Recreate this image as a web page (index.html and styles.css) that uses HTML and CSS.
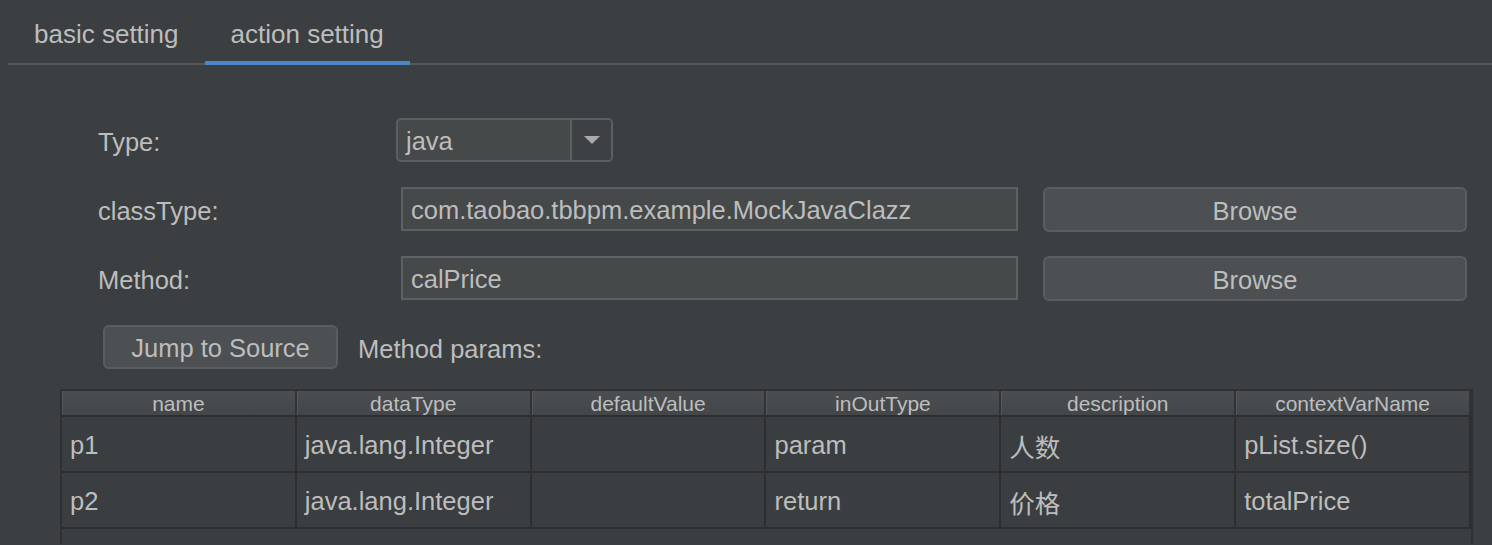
FILE: index.html
```html
<!DOCTYPE html>
<html>
<head>
<meta charset="utf-8">
<link rel="stylesheet" href="styles.css">
</head>
<body>
<div class="tabbar">
  <div class="tab">basic setting</div>
  <div class="tab active">action setting</div>
</div>
<div class="form">
  <div class="label">Type:</div>
  <div class="combo">
    <span class="combo-value">java</span>
    <span class="combo-arrow"><svg width="16" height="8" viewBox="0 0 16 8"><polygon points="0,0 16,0 8,8" fill="#a8aaac"/></svg></span>
  </div>
  <div></div>
  <div class="label">classType:</div>
  <div class="field">com.taobao.tbbpm.example.MockJavaClazz</div>
  <div class="button">Browse</div>
  <div class="label">Method:</div>
  <div class="field">calPrice</div>
  <div class="button">Browse</div>
</div>
<div class="actions">
  <div class="button jump">Jump to Source</div>
  <div class="label">Method params:</div>
</div>
<div class="table-wrap">
  <div class="table">
    <div class="th">name</div>
    <div class="th">dataType</div>
    <div class="th">defaultValue</div>
    <div class="th">inOutType</div>
    <div class="th">description</div>
    <div class="th">contextVarName</div>
    <div class="td">p1</div>
    <div class="td">java.lang.Integer</div>
    <div class="td"></div>
    <div class="td">param</div>
    <div class="td">人数</div>
    <div class="td">pList.size()</div>
    <div class="td">p2</div>
    <div class="td">java.lang.Integer</div>
    <div class="td"></div>
    <div class="td">return</div>
    <div class="td">价格</div>
    <div class="td">totalPrice</div>
  </div>
</div>
</body>
</html>
```
FILE: styles.css
```css
html, body {
  margin: 0;
  padding: 0;
  background: #3c3f41;
  color: #bdbdbd;
  font-family: "Liberation Sans", "Noto Sans CJK SC", sans-serif;
  font-size: 25.5px;
  overflow: hidden;
  height: 545px;
}

.tabbar {
  display: flex;
  margin-left: 8px;
  height: 63px;
  border-bottom: 2px solid #55585a;
}

.tab {
  box-sizing: border-box;
  height: 65px;
  margin-bottom: -2px;
  padding: 19px 26px 0;
  font-size: 26px;
  line-height: 30px;
}

.tab.active {
  border-bottom: 4px solid #4a88c7;
}

.form {
  display: grid;
  grid-template-columns: 273px 622px 424px;
  grid-auto-rows: 44px;
  column-gap: 25px;
  row-gap: 25px;
  margin: 53px 0 0 98px;
}

.label {
  display: flex;
  align-items: center;
  line-height: 30px;
  padding-top: 3px;
}

.combo {
  box-sizing: border-box;
  width: 217px;
  height: 44px;
  display: flex;
  border: 2px solid #5c5f61;
  border-radius: 5px;
  background: #45494a;
  overflow: hidden;
}

.combo-value {
  flex: 1;
  display: flex;
  align-items: center;
  padding: 3px 0 0 8px;
}

.combo-arrow {
  width: 39px;
  display: flex;
  align-items: center;
  justify-content: center;
  background: #3e4143;
  border-left: 2px solid #5c5f61;
}

.field {
  box-sizing: border-box;
  margin-left: 5px;
  height: 44px;
  display: flex;
  align-items: center;
  padding: 3px 0 0 8px;
  border: 2px solid #5e6163;
  background: #45494a;
}

.button {
  box-sizing: border-box;
  height: 45px;
  display: flex;
  align-items: center;
  justify-content: center;
  padding-top: 3px;
  border: 2px solid #5a5e60;
  border-radius: 6px;
  background: #4c5052;
}

.actions {
  display: flex;
  align-items: center;
  gap: 20px;
  margin: 25px 0 0 103px;
  height: 44px;
}

.button.jump {
  width: 235px;
  height: 44px;
}

.table-wrap {
  box-sizing: border-box;
  margin: 20px 0 0 60px;
  width: 1413px;
  height: 155px;
  border: 2px solid #2f3133;
  border-bottom: none;
  background: #3b3e40;
}

.table {
  display: grid;
  grid-template-columns: repeat(6, 1fr);
  grid-template-rows: 26px 56px 56px;
}

.th {
  display: flex;
  align-items: center;
  justify-content: center;
  padding-top: 1px;
  font-size: 21px;
  background: linear-gradient(#4b4e50, #444749);
  border-right: 2px solid #313335;
  border-bottom: 2px solid #2c2e30;
  box-shadow: inset 1px 0 0 #55585a;
}

.td {
  display: flex;
  align-items: center;
  padding: 2px 0 0 8px;
  border-right: 2px solid #2c2e30;
  border-bottom: 2px solid #2c2e30;
}
```
